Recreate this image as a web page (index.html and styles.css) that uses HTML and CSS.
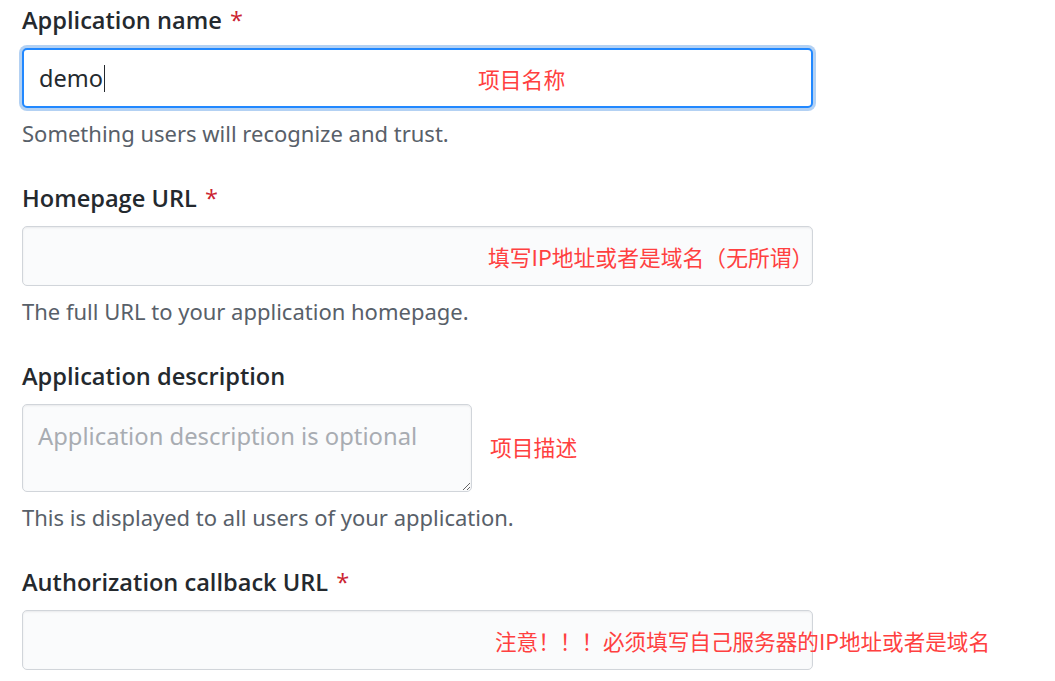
FILE: index.html
```html
<!DOCTYPE html>
<html lang="en">
<head>
<meta charset="utf-8">
<title>Register a new OAuth application</title>
<link rel="stylesheet" href="styles.css">
</head>
<body>
<form class="form">
  <div class="group">
    <label class="label">Application name <span class="req">*</span></label>
    <div class="field-wrap">
      <div class="input input-focus"><span class="value">demo</span><span class="caret"></span></div>
      <span class="note note-name">项目名称</span>
    </div>
    <p class="help">Something users will recognize and trust.</p>
  </div>
  <div class="group">
    <label class="label">Homepage URL <span class="req">*</span></label>
    <div class="field-wrap">
      <input class="input" type="text">
      <span class="note note-home">填写IP地址或者是域名（无所谓）</span>
    </div>
    <p class="help">The full URL to your application homepage.</p>
  </div>
  <div class="group">
    <label class="label">Application description</label>
    <div class="row">
      <textarea class="textarea" placeholder="Application description is optional"></textarea>
      <span class="note note-desc">项目描述</span>
    </div>
    <p class="help">This is displayed to all users of your application.</p>
  </div>
  <div class="group">
    <label class="label">Authorization callback URL <span class="req">*</span></label>
    <div class="field-wrap">
      <input class="input" type="text">
      <span class="note note-cb">注意！！！必须填写自己服务器的IP地址或者是域名</span>
    </div>
  </div>
</form>
</body>
</html>
```
FILE: styles.css
```css
html, body {
  margin: 0;
  padding: 0;
  background: #ffffff;
  overflow: hidden;
}
body {
  font-family: "Noto Sans", "Liberation Sans", sans-serif;
  color: #24292e;
}
.form {
  padding: 5px 0 0 22px;
}
.group {
  margin-bottom: 35px;
}
.label {
  display: block;
  font-family: "Open Sans", "Noto Sans", sans-serif;
  font-size: 23.6px;
  line-height: 30px;
  font-weight: 600;
  color: #24292e;
  margin-bottom: 13px;
}
.req {
  color: #cb2431;
  font-weight: 400;
  margin-left: 2px;
}
.field-wrap {
  position: relative;
  width: 791px;
}
.input {
  display: flex;
  align-items: center;
  box-sizing: border-box;
  width: 791px;
  height: 60px;
  margin: 0;
  padding: 0 15px;
  font-family: inherit;
  font-size: 23.5px;
  color: #24292e;
  background: #fafbfc;
  border: 1.5px solid #d1d5da;
  border-radius: 5px;
  box-shadow: inset 0 1px 2px rgba(27, 31, 35, 0.075);
  outline: none;
}
.input-focus {
  background: #ffffff;
  border: 2px solid #2188ff;
  box-shadow: 0 0 0 3px rgba(3, 102, 214, 0.3);
}
.caret {
  display: inline-block;
  width: 1px;
  height: 27px;
  background: #24292e;
  margin-left: 1px;
}
.note {
  position: absolute;
  top: 50%;
  transform: translateY(-50%);
  font-family: "Noto Sans CJK SC", "Noto Sans", sans-serif;
  font-size: 21.8px;
  color: #ff4040;
  white-space: nowrap;
}
.note-name { left: 456px; }
.note-home { left: 466px; }
.note-cb { left: 473px; font-size: 21.6px; }
.row {
  display: flex;
  align-items: center;
}
.textarea {
  box-sizing: border-box;
  width: 450px;
  height: 88px;
  margin: 0;
  padding: 15px 15px;
  font-family: "Noto Sans", "Liberation Sans", sans-serif;
  font-size: 23.8px;
  line-height: 32px;
  background: #fafbfc;
  border: 1.5px solid #d1d5da;
  border-radius: 5px;
  box-shadow: inset 0 1px 2px rgba(27, 31, 35, 0.075);
  outline: none;
  resize: both;
}
.textarea::placeholder {
  color: #a8acb2;
}
.note-desc {
  position: static;
  transform: none;
  margin-left: 18px;
  margin-bottom: 4px;
}
.help {
  margin: 10px 0 0 0;
  font-size: 22px;
  line-height: 30px;
  color: #586069;
}
```
